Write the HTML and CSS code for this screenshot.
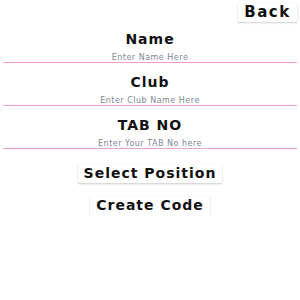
FILE: index.html
```
<!DOCTYPE html>
<html lang="en">

<head>
    <meta charset="UTF-8">
    <meta name="viewport" content="width=device-width, initial-scale=1.0">
    <title>Create Code</title>
    <link rel="stylesheet" href="styles.css">
</head>

<body>
    <div class="top">
        <button class="btn back">Back</button>
    </div>

    <div class="form">
        <div class="field">
            <div class="label">Name</div>
            <input class="entry first" type="text" placeholder="Enter Name Here">
        </div>
        <div class="field">
            <div class="label">Club</div>
            <input class="entry" type="text" placeholder="Enter Club Name Here">
        </div>
        <div class="field">
            <div class="label">TAB NO</div>
            <input class="entry" type="text" placeholder="Enter Your TAB No here">
        </div>
    </div>

    <div class="actions">
        <button class="btn">Select Position</button>
        <button class="btn">Create Code</button>
    </div>
</body>

</html>
```
FILE: styles.css
```
body {
    margin: 0;
    background: #fff;
    font-family: "DejaVu Sans", sans-serif;
    color: #111;
}

.top {
    display: flex;
    justify-content: flex-end;
    padding: 3px 3px 0 0;
}

.btn {
    font-family: "DejaVu Sans", sans-serif;
    font-weight: bold;
    font-size: 14px;
    letter-spacing: 1px;
    line-height: 19px;
    height: 19px;
    padding: 0 6px;
    background: #fff;
    color: #111;
    border: none;
    border-radius: 1px;
    box-shadow: 0 1px 2px rgba(0, 0, 0, 0.18), 0 0 1px rgba(0, 0, 0, 0.12);
}

.back {
    font-size: 15px;
    letter-spacing: 1.5px;
    width: 59px;
    padding: 0;
}

.form {
    display: flex;
    flex-direction: column;
    gap: 11px;
    margin: 9px 3px 0;
}

.field {
    display: flex;
    flex-direction: column;
}

.label {
    text-align: center;
    font-weight: bold;
    font-size: 14px;
    letter-spacing: 1px;
    line-height: 16px;
}

.entry {
    margin-top: 5px;
    height: 11px;
    box-sizing: border-box;
    padding: 0;
    border: 0;
    border-bottom: 1px solid #eca3c9;
    font-family: "DejaVu Sans", sans-serif;
    font-size: 8px;
    letter-spacing: 0.5px;
    line-height: 10px;
    text-align: center;
    outline: none;
    background: #fff;
}

.entry.first {
    border-bottom-color: #ff9cc9;
}

.entry::placeholder {
    color: #7d8894;
}

.actions {
    display: flex;
    flex-direction: column;
    align-items: center;
    gap: 13px;
    margin-top: 15px;
}
```
